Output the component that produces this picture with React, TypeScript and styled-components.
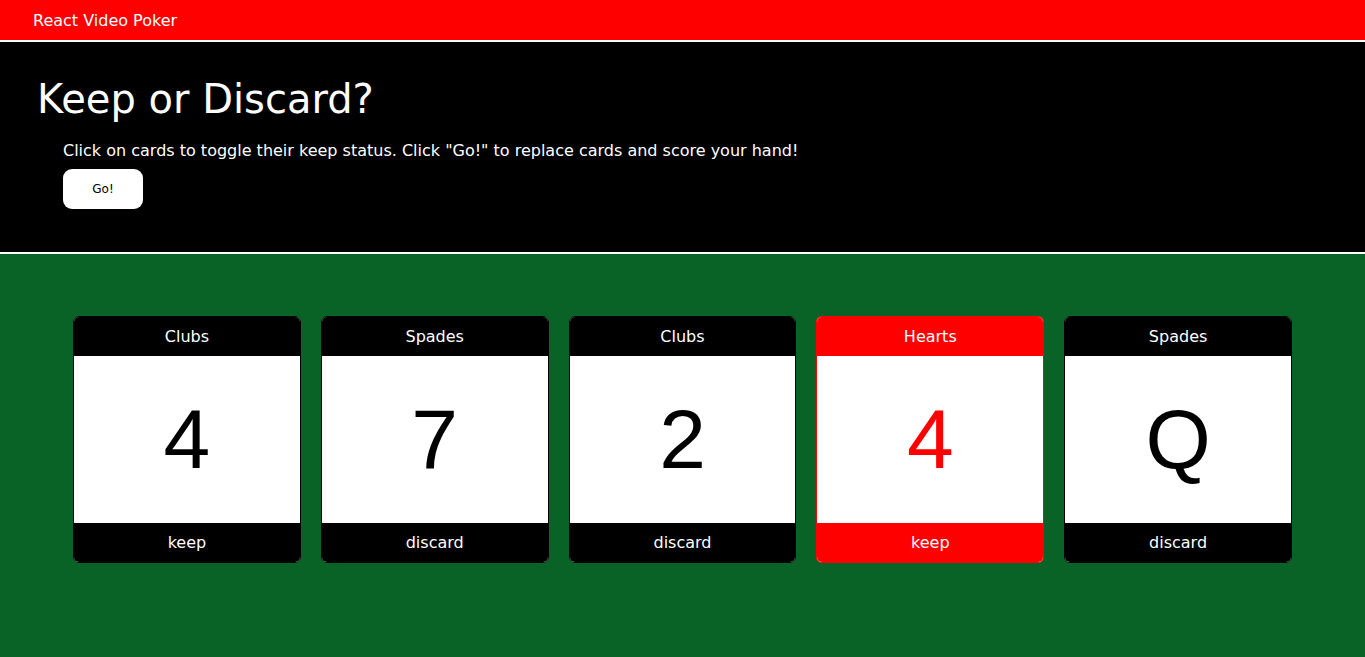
import React from "react";
import styled, { createGlobalStyle } from "styled-components";

const Global = createGlobalStyle`
  html, body { margin: 0; padding: 0; background: #096226; }
  body { font-family: "DejaVu Sans", Verdana, sans-serif; }
  #root { min-height: 100vh; display: flex; flex-direction: column; }
`;

const TopBar = styled.header`
  background: #ff0000;
  height: 40px;
  display: flex;
  align-items: center;
  padding-left: 33px;
  color: #fff;
  font-size: 16px;
  border-bottom: 2px solid #fff;
`;

const Intro = styled.section`
  background: #000;
  color: #fff;
  height: 212px;
  box-sizing: border-box;
  padding: 33px 0 0 37px;
  border-bottom: 2px solid #fff;
`;

const Heading = styled.h1`
  margin: 0;
  font-size: 40px;
  font-weight: normal;
  line-height: 48px;
`;

const Instructions = styled.div`
  padding-left: 26px;
  margin-top: 18px;
  display: flex;
  flex-direction: column;
  align-items: flex-start;
  gap: 8px;
`;

const Text = styled.p`
  margin: 0;
  font-size: 16px;
  line-height: 20px;
`;

const GoButton = styled.button`
  width: 80px;
  height: 40px;
  border: none;
  border-radius: 9px;
  background: #fff;
  color: #000;
  font-family: inherit;
  font-size: 12px;
  cursor: pointer;
`;

const Table = styled.main`
  flex: 1;
  background: #096226;
  display: flex;
  gap: 20px;
  padding: 62px 73px 0;
`;

const Card = styled.div<{ $red: boolean }>`
  flex: 1;
  height: 247px;
  box-sizing: border-box;
  border: 1px solid ${(p) => (p.$red ? "#ff0000" : "#000")};
  border-radius: 6px;
  overflow: hidden;
  display: flex;
  flex-direction: column;
  background: #fff;
  cursor: pointer;
`;

const Band = styled.div<{ $red: boolean }>`
  height: 39px;
  flex: none;
  background: ${(p) => (p.$red ? "#ff0000" : "#000")};
  color: #fff;
  font-size: 16px;
  display: flex;
  align-items: center;
  justify-content: center;
`;

const Face = styled.div<{ $red: boolean }>`
  flex: 1;
  display: flex;
  align-items: center;
  justify-content: center;
  font-family: "Liberation Sans", Arial, sans-serif;
  font-size: 84px;
  color: ${(p) => (p.$red ? "#ff0000" : "#000")};
`;

const cards = [
  { suit: "Clubs", rank: "4", status: "keep" },
  { suit: "Spades", rank: "7", status: "discard" },
  { suit: "Clubs", rank: "2", status: "discard" },
  { suit: "Hearts", rank: "4", status: "keep" },
  { suit: "Spades", rank: "Q", status: "discard" },
];

export default function App() {
  return (
    <>
      <Global />
      <TopBar>React Video Poker</TopBar>
      <Intro>
        <Heading>Keep or Discard?</Heading>
        <Instructions>
          <Text>Click on cards to toggle their keep status. Click "Go!" to replace cards and score your hand!</Text>
          <GoButton>Go!</GoButton>
        </Instructions>
      </Intro>
      <Table>
        {cards.map((c, i) => {
          const red = c.suit === "Hearts" || c.suit === "Diamonds";
          return (
            <Card key={i} $red={red}>
              <Band $red={red}>{c.suit}</Band>
              <Face $red={red}>{c.rank}</Face>
              <Band $red={red}>{c.status}</Band>
            </Card>
          );
        })}
      </Table>
    </>
  );
}
